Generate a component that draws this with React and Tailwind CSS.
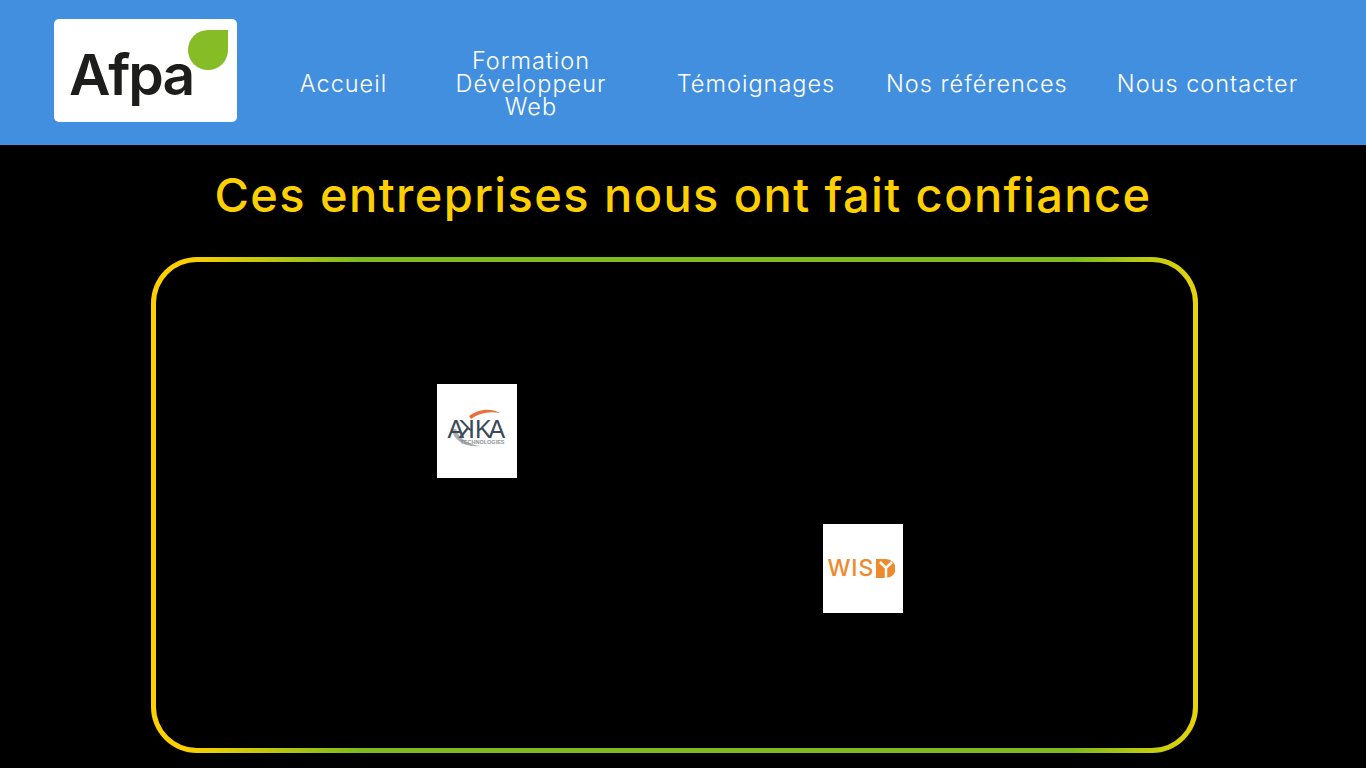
const navLinks = [
  { label: "Accueil", width: "w-[89px] whitespace-nowrap" },
  { label: "Formation Développeur Web", width: "w-[190px] px-[16px]" },
  { label: "Témoignages", width: "w-[164px] whitespace-nowrap" },
  { label: "Nos références", width: "w-[181px] whitespace-nowrap" },
  { label: "Nous contacter", width: "w-[185px] whitespace-nowrap" },
];

const AfpaLogo = () => (
  <div className="relative w-[183px] h-[103px] bg-white rounded-[5px] shrink-0 overflow-hidden">
    <span className="absolute left-[15px] top-[24px] text-[57px] leading-[64px] font-semibold tracking-[-2px] text-[#1d1d1b] font-['Inter',sans-serif]">
      Afpa
    </span>
    <svg className="absolute left-[134px] top-[11px]" width="40" height="40" viewBox="0 0 40 40">
      <path d="M20 0H40V20A20 20 0 0 1 0 20A20 20 0 0 1 20 0Z" fill="#86bc25" />
    </svg>
  </div>
);

const AkkaLogo = () => (
  <div className="relative w-[80px] h-[94px] bg-white overflow-hidden">
    <svg className="absolute left-0 top-0" width="80" height="94" viewBox="0 0 80 94">
      <path d="M32 32C40 26 52 23 63 29C52 27 42 29 34 35Z" fill="#e8703a" />
      <path d="M15 45C16 56 28 64 44 62C32 61 22 55 19 45Z" fill="#a9aeb0" />
    </svg>
    <div className="absolute left-[11px] top-[36px] flex text-[25px] leading-[18px] tracking-[-3px] text-[#3a4a56] font-['Liberation_Sans',sans-serif]">
      <span>A</span>
      <span className="-scale-x-100">K</span>
      <span>K</span>
      <span>A</span>
    </div>
    <span className="absolute left-[24px] top-[56px] text-[5.5px] leading-[5px] font-bold text-[#8b9296] font-['Liberation_Sans',sans-serif]">
      TECHNOLOGIES
    </span>
  </div>
);

const WisyLogo = () => (
  <div className="relative w-[80px] h-[89px] bg-white overflow-hidden">
    <span className="absolute left-[5px] top-[30px] text-[23px] leading-[28px] font-medium text-[#ee8a2c] font-['Inter',sans-serif] tracking-[0.8px]">
      WIS
    </span>
    <svg className="absolute left-[53px] top-[35px]" width="19" height="19" viewBox="0 0 19 19">
      <path d="M0 0H10A9.5 9.5 0 0 1 10 19H0Z" fill="#ee8a2c" />
      <path d="M4 3L10 9L16 3M10 9V19" fill="none" stroke="#fff" strokeWidth="2.5" />
    </svg>
  </div>
);

export default function App() {
  return (
    <div className="min-h-[768px] bg-black overflow-hidden">
      <header className="h-[145px] bg-[#428fe0] flex items-start pl-[54px] pt-[19px]">
        <AfpaLogo />
        <nav className="flex items-center ml-[62px] mt-[30px] gap-[48px]">
          {navLinks.map((link) => (
            <a
              key={link.label}
              className={`${link.width} shrink-0 text-center text-white font-light text-[23.5px] leading-[23px] tracking-[1px] font-['Inter',sans-serif]`}
            >
              {link.label}
            </a>
          ))}
        </nav>
      </header>

      <main className="flex flex-col items-center">
        <h1 className="mt-[20px] h-[92px] text-[#ffd000] text-[47px] leading-[60px] font-medium tracking-[1.4px] font-['Inter',sans-serif]">
          Ces entreprises nous ont fait confiance
        </h1>
        <div className="w-[1047px] h-[496px] mr-[18px] p-[5px] rounded-[46px] bg-[linear-gradient(90deg,#ffd000_3%,#7dbb1f_20%,#7dbb1f_88%,#e8d508_100%)]">
          <div className="h-full bg-black rounded-[41px] flex items-start pl-[281px] pt-[122px] gap-[306px]">
            <AkkaLogo />
            <div className="mt-[140px]">
              <WisyLogo />
            </div>
          </div>
        </div>
      </main>
    </div>
  );
}
